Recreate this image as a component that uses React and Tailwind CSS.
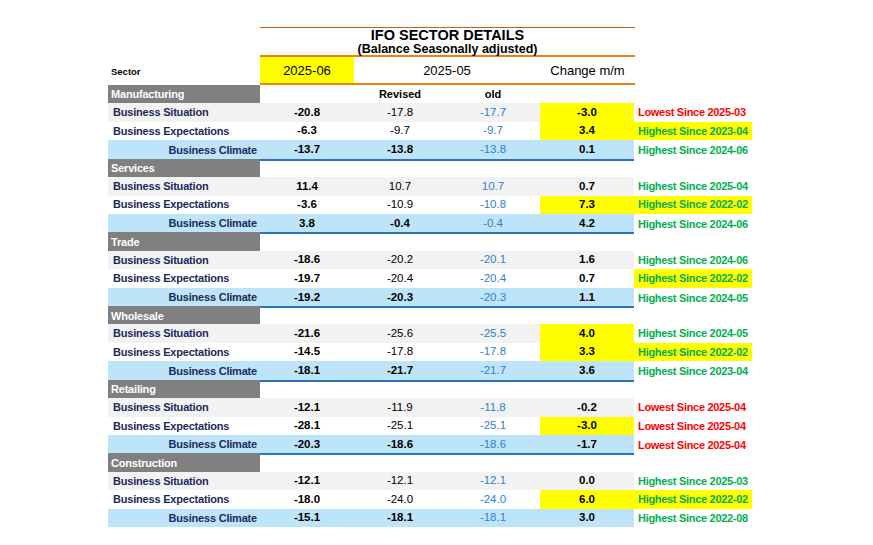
import React from "react";

const sections = [
  {
    name: "Manufacturing",
    rows: [
      ["-20.8", "-17.8", "-17.7", "-3.0", true, "Lowest Since 2025-03", false],
      ["-6.3", "-9.7", "-9.7", "3.4", true, "Highest Since 2023-04", true],
      ["-13.7", "-13.8", "-13.8", "0.1", false, "Highest Since 2024-06", false],
    ],
  },
  {
    name: "Services",
    rows: [
      ["11.4", "10.7", "10.7", "0.7", false, "Highest Since 2025-04", false],
      ["-3.6", "-10.9", "-10.8", "7.3", true, "Highest Since 2022-02", true],
      ["3.8", "-0.4", "-0.4", "4.2", false, "Highest Since 2024-06", false],
    ],
  },
  {
    name: "Trade",
    rows: [
      ["-18.6", "-20.2", "-20.1", "1.6", false, "Highest Since 2024-06", false],
      ["-19.7", "-20.4", "-20.4", "0.7", false, "Highest Since 2022-02", true],
      ["-19.2", "-20.3", "-20.3", "1.1", false, "Highest Since 2024-05", false],
    ],
  },
  {
    name: "Wholesale",
    rows: [
      ["-21.6", "-25.6", "-25.5", "4.0", true, "Highest Since 2024-05", false],
      ["-14.5", "-17.8", "-17.8", "3.3", true, "Highest Since 2022-02", true],
      ["-18.1", "-21.7", "-21.7", "3.6", false, "Highest Since 2023-04", false],
    ],
  },
  {
    name: "Retailing",
    rows: [
      ["-12.1", "-11.9", "-11.8", "-0.2", false, "Lowest Since 2025-04", false],
      ["-28.1", "-25.1", "-25.1", "-3.0", true, "Lowest Since 2025-04", false],
      ["-20.3", "-18.6", "-18.6", "-1.7", false, "Lowest Since 2025-04", false],
    ],
  },
  {
    name: "Construction",
    rows: [
      ["-12.1", "-12.1", "-12.1", "0.0", false, "Highest Since 2025-03", false],
      ["-18.0", "-24.0", "-24.0", "6.0", true, "Highest Since 2022-02", true],
      ["-15.1", "-18.1", "-18.1", "3.0", false, "Highest Since 2022-08", false],
    ],
  },
];

const labels = ["Business Situation", "Business Expectations", "Business Climate"];
const GRID = "grid grid-cols-[152px_94px_92px_94px_94px_118px]";

function DataRow({ kind, data, last }) {
  const [v6, rev, old, chg, chgYellow, comment, commentYellow] = data;
  const bg =
    kind === 0 ? "bg-[#f2f2f2]" : kind === 2 ? "bg-[#bee4fa]" : "bg-white";
  const border = kind === 2 && !last ? "border-b-2 border-[#2a72bb] pt-[1px]" : "";
  const isLow = comment.startsWith("Lowest");
  return (
    <div className={`${GRID} h-[18.43px]`}>
      <div className={`col-span-5 grid grid-cols-[152px_94px_92px_94px_94px] items-center ${bg} ${border}`}>
        <div
          className={`text-[11px] font-bold tracking-[-0.2px] text-[#1b2a5a] ${
            kind === 2 ? "text-right pr-[3px]" : "pl-[5px]"
          }`}
        >
          {labels[kind]}
        </div>
        <div className="text-center text-[11.5px] font-bold text-black">{v6}</div>
        <div className={`text-center text-[11.5px] text-black ${kind === 2 ? "font-bold" : ""}`}>{rev}</div>
        <div className="text-center text-[11.5px] text-[#2f80d0]">{old}</div>
        <div
          className={`h-full flex items-center justify-center text-[11.5px] font-bold text-black ${
            chgYellow ? "bg-[#ffff00]" : ""
          }`}
        >
          {chg}
        </div>
      </div>
      <div
        className={`flex items-center pl-[4px] text-[11px] font-bold tracking-[-0.3px] whitespace-nowrap ${
          isLow ? "text-[#ff0000]" : "text-[#00b050]"
        } ${commentYellow ? "bg-[#ffff00]" : ""}`}
      >
        {comment}
      </div>
    </div>
  );
}

export default function App() {
  return (
    <div
      className="w-[873px] h-[545px] bg-white pt-[27px] pl-[108px] overflow-hidden"
      style={{ fontFamily: '"Liberation Sans", Arial, sans-serif' }}
    >
      {/* Title */}
      <div className="flex">
        <div className="w-[152px]" />
        <div className="w-[375px] border-t border-[#c8600f] border-b-2 border-b-[#f08010] h-[30px] flex flex-col items-center text-black font-bold">
          <div className="text-[14.5px] leading-[15px]">IFO SECTOR DETAILS</div>
          <div className="text-[12.5px] leading-[12px]">(Balance Seasonally adjusted)</div>
        </div>
      </div>
      {/* Header */}
      <div className="flex h-[28px]">
        <div className="w-[152px] flex items-center pl-[3px] text-[9.5px] font-bold text-black pt-[2px]">
          Sector
        </div>
        <div className="w-[375px] flex border-b-2 border-[#f08010]">
          <div className="w-[94px] bg-[#ffff00] flex items-center justify-center text-[13px] text-black pt-[2px]">
            2025-06
          </div>
          <div className="w-[186px] flex items-center justify-center text-[13px] text-black pt-[2px]">2025-05</div>
          <div className="w-[95px] flex items-center justify-center text-[13px] text-black pt-[2px]">Change m/m</div>
        </div>
      </div>
      {/* Sections */}
      {sections.map((s, si) => (
        <div key={s.name}>
          <div className={`${GRID} h-[18.43px] items-center`}>
            <div className="h-full bg-[#808080] flex items-center pl-[3px] pt-[1px] text-[11px] font-bold tracking-[-0.2px] text-white">
              {s.name}
            </div>
            <div />
            <div className="text-center text-[11px] font-bold text-black pt-[1px]">{si === 0 ? "Revised" : ""}</div>
            <div className="text-center text-[11px] font-bold text-black pt-[1px]">{si === 0 ? "old" : ""}</div>
            <div />
            <div />
          </div>
          {s.rows.map((r, i) => (
            <DataRow key={i} kind={i} data={r} last={si === sections.length - 1 && i === 2} />
          ))}
        </div>
      ))}
    </div>
  );
}
